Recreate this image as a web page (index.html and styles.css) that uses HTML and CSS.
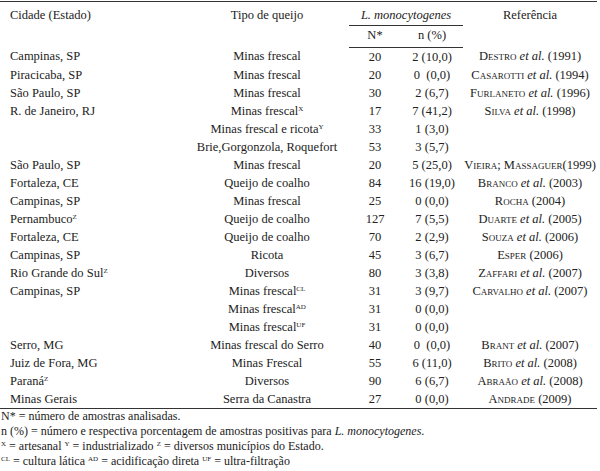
FILE: index.html
```html
<!DOCTYPE html>
<html lang="pt">
<head>
<meta charset="utf-8">
<link rel="stylesheet" href="styles.css">
</head>
<body>
<div class="page">
<table class="tbl">
  <colgroup>
    <col class="c-city"><col class="c-type"><col class="c-n"><col class="c-pct"><col class="c-ref">
  </colgroup>
  <thead>
    <tr class="h1">
      <th rowspan="2" class="city top">Cidade (Estado)</th>
      <th rowspan="2" class="top">Tipo de queijo</th>
      <th colspan="2" class="lm"><span class="lm-line"><i>L. monocytogenes</i></span></th>
      <th rowspan="2" class="top">Referência</th>
    </tr>
    <tr class="h2">
      <th>N*</th>
      <th>n (%)</th>
    </tr>
  </thead>
  <tbody>
    <tr><td class="city">Campinas, SP</td><td>Minas frescal</td><td>20</td><td>2 (10,0)</td><td><span class="sc">Destro</span> <i>et al.</i> (1991)</td></tr>
    <tr><td class="city">Piracicaba, SP</td><td>Minas frescal</td><td>20</td><td>0&nbsp; (0,0)</td><td><span class="sc">Casarotti</span> <i>et al.</i> (1994)</td></tr>
    <tr><td class="city">São Paulo, SP</td><td>Minas frescal</td><td>30</td><td>2 (6,7)</td><td><span class="sc">Furlaneto</span> <i>et al.</i> (1996)</td></tr>
    <tr><td class="city">R. de Janeiro, RJ</td><td>Minas frescal<sup>X</sup></td><td>17</td><td>7 (41,2)</td><td><span class="sc">Silva</span> <i>et al.</i> (1998)</td></tr>
    <tr><td class="city"></td><td>Minas frescal e ricota<sup>Y</sup></td><td>33</td><td>1 (3,0)</td><td></td></tr>
    <tr><td class="city"></td><td>Brie,Gorgonzola, Roquefort</td><td>53</td><td>3 (5,7)</td><td></td></tr>
    <tr><td class="city">São Paulo, SP</td><td>Minas frescal</td><td>20</td><td>5 (25,0)</td><td><span class="sc">Vieira; Massaguer</span>(1999)</td></tr>
    <tr><td class="city">Fortaleza, CE</td><td>Queijo de coalho</td><td>84</td><td>16 (19,0)</td><td><span class="sc">Branco</span> <i>et al.</i> (2003)</td></tr>
    <tr><td class="city">Campinas, SP</td><td>Minas frescal</td><td>25</td><td>0 (0,0)</td><td><span class="sc">Rocha</span> (2004)</td></tr>
    <tr><td class="city">Pernambuco<sup>Z</sup></td><td>Queijo de coalho</td><td>127</td><td>7 (5,5)</td><td><span class="sc">Duarte</span> <i>et al.</i> (2005)</td></tr>
    <tr><td class="city">Fortaleza, CE</td><td>Queijo de coalho</td><td>70</td><td>2 (2,9)</td><td><span class="sc">Souza</span> <i>et al.</i> (2006)</td></tr>
    <tr><td class="city">Campinas, SP</td><td>Ricota</td><td>45</td><td>3 (6,7)</td><td><span class="sc">Esper</span> (2006)</td></tr>
    <tr><td class="city">Rio Grande do Sul<sup>Z</sup></td><td>Diversos</td><td>80</td><td>3 (3,8)</td><td><span class="sc">Zaffari</span> <i>et al.</i> (2007)</td></tr>
    <tr><td class="city">Campinas, SP</td><td>Minas frescal<sup>CL</sup></td><td>31</td><td>3 (9,7)</td><td><span class="sc">Carvalho</span> <i>et al.</i> (2007)</td></tr>
    <tr><td class="city"></td><td>Minas frescal<sup>AD</sup></td><td>31</td><td>0 (0,0)</td><td></td></tr>
    <tr><td class="city"></td><td>Minas frescal<sup>UF</sup></td><td>31</td><td>0 (0,0)</td><td></td></tr>
    <tr><td class="city">Serro, MG</td><td>Minas frescal do Serro</td><td>40</td><td>0&nbsp; (0,0)</td><td><span class="sc">Brant</span> <i>et al.</i> (2007)</td></tr>
    <tr><td class="city">Juiz de Fora, MG</td><td>Minas Frescal</td><td>55</td><td>6 (11,0)</td><td><span class="sc">Brito</span> <i>et al.</i> (2008)</td></tr>
    <tr><td class="city">Paraná<sup>Z</sup></td><td>Diversos</td><td>90</td><td>6 (6,7)</td><td><span class="sc">Abraão</span> <i>et al.</i> (2008)</td></tr>
    <tr class="last"><td class="city">Minas Gerais</td><td>Serra da Canastra</td><td>27</td><td>0 (0,0)</td><td><span class="sc">Andrade</span> (2009)</td></tr>
  </tbody>
</table>
<div class="notes">
  <p>N* = número de amostras analisadas.</p>
  <p>n (%) = número e respectiva porcentagem de amostras positivas para <i>L. monocytogenes</i>.</p>
  <p><sup>X</sup> = artesanal <sup>Y</sup> = industrializado <sup>Z</sup> = diversos municípios do Estado.</p>
  <p><sup>CL</sup> = cultura lática <sup>AD</sup> = acidificação direta <sup>UF</sup> = ultra-filtração</p>
</div>
</div>
</body>
</html>
```

FILE: styles.css
```css
html, body {
  margin: 0;
  padding: 0;
  background: #ffffff;
}
body {
  font-family: "Liberation Serif", "DejaVu Serif", serif;
  font-size: 12.5px;
  color: #222222;
}
.page {
  width: 600px;
  padding-top: 1px;
}
.tbl {
  width: 597px;
  border-collapse: collapse;
  table-layout: fixed;
  font-size: 12.5px;
}
.c-city { width: 185px; }
.c-type { width: 164px; }
.c-n { width: 52px; }
.c-pct { width: 62px; }
.c-ref { width: 134px; }

.tbl thead tr.h1 th {
  border-top: 1.5px solid #333333;
}
.tbl th {
  font-weight: normal;
  text-align: center;
  padding: 0;
}
.tbl th.top {
  vertical-align: top;
  padding-top: 6px;
}
.tbl th.city, .tbl td.city {
  text-align: left;
  padding-left: 10px;
}
.tbl tr.h1 { height: 21px; }
.tbl tr.h2 { height: 21px; }
.tbl tr.h2 th {
  border-bottom: 1.5px solid #333333;
  vertical-align: middle;
  padding-bottom: 1px;
}
.tbl th.lm {
  vertical-align: top;
  padding-top: 6px;
}
.lm-line {
  display: block;
  border-bottom: 1px solid #333333;
  padding-bottom: 2px;
}
.tbl td {
  text-align: center;
  padding: 0;
  height: 18px;
  line-height: 18px;
  white-space: nowrap;
}
.tbl tr.last td {
  border-bottom: 1.5px solid #333333;
}
.sc {
  font-variant: small-caps;
}
sup {
  font-size: 7px;
  line-height: 0;
  vertical-align: 4px;
}
.notes {
  padding-left: 1px;
}
.notes p {
  margin: 0;
  line-height: 15px;
  font-size: 12px;
}
```
